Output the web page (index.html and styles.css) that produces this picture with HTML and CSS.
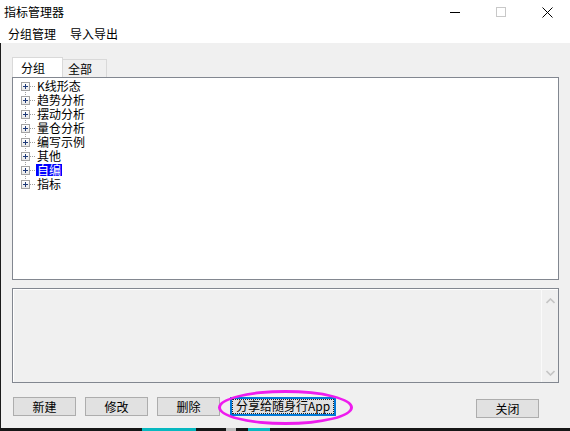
FILE: index.html
```
<!DOCTYPE html>
<html lang="zh-CN">
<head>
    <meta charset="UTF-8">
    <title>指标管理器</title>
    <link rel="stylesheet" href="styles.css">
</head>
<body>
    <div class="win">
        <div class="titlebar">
            <span class="title">指标管理器</span>
            <div class="caps">
                <span class="cap"><svg width="10" height="10" viewBox="0 0 10 10"><path d="M0 5.5h10" stroke="#000" stroke-width="1"/></svg></span>
                <span class="cap"><svg width="10" height="10" viewBox="0 0 10 10"><rect x="0.5" y="0.5" width="9" height="9" fill="none" stroke="#c8c8c8"/></svg></span>
                <span class="cap"><svg width="11" height="11" viewBox="0 0 11 11"><path d="M0.5 0.5l10 10M10.5 0.5l-10 10" stroke="#000" stroke-width="1"/></svg></span>
            </div>
        </div>
        <div class="menubar">
            <span class="menu">分组管理</span>
            <span class="menu">导入导出</span>
        </div>
        <div class="client">
            <div class="tabs">
                <span class="tab on">分组</span>
                <span class="tab">全部</span>
            </div>
            <div class="tree">
                <div class="tree-list">
                    <div class="node"><i class="exp"></i><i class="dots"></i><span class="lbl">K线形态</span></div>
                    <div class="node"><i class="exp"></i><i class="dots"></i><span class="lbl">趋势分析</span></div>
                    <div class="node"><i class="exp"></i><i class="dots"></i><span class="lbl">摆动分析</span></div>
                    <div class="node"><i class="exp"></i><i class="dots"></i><span class="lbl">量仓分析</span></div>
                    <div class="node"><i class="exp"></i><i class="dots"></i><span class="lbl">编写示例</span></div>
                    <div class="node"><i class="exp"></i><i class="dots"></i><span class="lbl">其他</span></div>
                    <div class="node"><i class="exp"></i><i class="dots"></i><span class="lbl sel">自编</span></div>
                    <div class="node"><i class="exp"></i><i class="dots"></i><span class="lbl">指标</span></div>
                </div>
            </div>
            <div class="memo">
                <div class="memo-text"></div>
                <div class="vscroll">
                    <svg width="9" height="6" viewBox="0 0 9 6"><path d="M0.5 5l4-4 4 4" fill="none" stroke="#c5c5c5" stroke-width="1.6"/></svg>
                    <svg width="9" height="6" viewBox="0 0 9 6"><path d="M0.5 1l4 4 4-4" fill="none" stroke="#c5c5c5" stroke-width="1.6"/></svg>
                </div>
            </div>
            <div class="btns">
                <button class="btn">新建</button>
                <button class="btn">修改</button>
                <button class="btn">删除</button>
                <button class="btn share"><span class="focus">分享给随身行App</span></button>
                <button class="btn close">关闭</button>
                <div class="ring"></div>
            </div>
        </div>
        <div class="desk"></div>
    </div>
</body>
</html>
```
FILE: styles.css
```
*{padding: 0;margin: 0;box-sizing: border-box;}
body{width: 570px;height: 431px;overflow: hidden;background: #161616;font-family: "Noto Sans CJK SC", "Liberation Sans", sans-serif;font-size: 12px;color: #000;}
.win{display: flex;flex-direction: column;height: 431px;}

/* title + menu */
.titlebar{display: flex;align-items: center;height: 24px;background: #fff;}
.title{padding-left: 4px;line-height: 24px;}
.caps{display: flex;margin-left: auto;height: 24px;}
.cap{display: flex;align-items: center;justify-content: center;width: 46px;}
.menubar{display: flex;height: 19px;background: #fff;padding-left: 8px;gap: 14px;line-height: 19px;}

/* client area */
.client{position: relative;display: flex;flex-direction: column;height: 385px;background: #f0f0f0;border-left: 1px solid #1c1c1c;padding: 14px 11px 0 11px;}
.tabs{display: flex;align-items: flex-end;height: 20px;}
.tab{height: 18px;width: 44px;padding-left: 5px;line-height: 17px;background: #f0f0f0;border: 1px solid #d9d9d9;border-bottom: none;border-left: none;}
.tab.on{height: 20px;width: 51px;padding-left: 8px;line-height: 20px;background: #fff;border-left: 1px solid #d9d9d9;}

.tree{height: 203px;background: #fff;border: 1px solid #828790;padding: 1px 0 0 8px;}
.tree-list{background: repeating-linear-gradient(to bottom, #a0a0a0 0 1px, transparent 1px 2px) 4px 7px / 1px calc(100% - 14px) no-repeat;}
.node{display: flex;align-items: center;height: 14px;}
.exp{position: relative;display: block;width: 9px;height: 9px;border: 1px solid #a4a4a4;background: linear-gradient(#fff, #e8e8e8);}
.exp::before{content: "";position: absolute;left: 1px;top: 3px;width: 5px;height: 1px;background: #1e3a78;}
.exp::after{content: "";position: absolute;left: 3px;top: 1px;width: 1px;height: 5px;background: #1e3a78;}
.dots{display: block;width: 6px;height: 1px;background: repeating-linear-gradient(to right, #a0a0a0 0 1px, transparent 1px 2px);}
.lbl{padding: 0 1px;height: 14px;line-height: 14px;}
.lbl.sel{background: linear-gradient(transparent 1px, #0000ff 1px, #0000ff 13px, transparent 13px);color: #fff;}

.memo{display: flex;height: 95px;margin-top: 8px;border: 1px solid #828790;background: #f0f0f0;}
.memo-text{flex: 1;border-top: 1px solid #fff;border-left: 1px solid #fff;}
.vscroll{display: flex;flex-direction: column;justify-content: space-between;align-items: center;width: 17px;padding: 8px 0 6px;border-left: 1px solid #fafafa;border-top: 1px solid #fff;}

/* buttons */
.btns{position: relative;display: flex;align-items: flex-start;margin-top: 14px;padding-left: 1px;}
.btn{height: 19px;width: 63px;margin-right: 9px;font: inherit;background: #e1e1e1;border: 1px solid #adadad;color: #000;line-height: 16px;}
.btn.share{width: 106px;margin-left: 1px;border: 2px solid #0078d7;padding: 1px;}
.focus{display: block;height: 13px;line-height: 12px;outline: 1px dotted #222;}
.btn.close{margin-left: auto;margin-right: 20px;margin-top: 2px;}
.ring{position: absolute;left: 206px;top: -7px;width: 135px;height: 35px;border: 3px solid #ee1cee;border-radius: 50%;pointer-events: none;}

.desk{flex: 1;background: linear-gradient(to right, #161616 0 142px, #08b8c0 142px 196px, #161616 196px 226px, #bdbdbd 226px 236px, #161616 236px 248px, #08b8c0 248px 270px, #161616 270px);}
```
